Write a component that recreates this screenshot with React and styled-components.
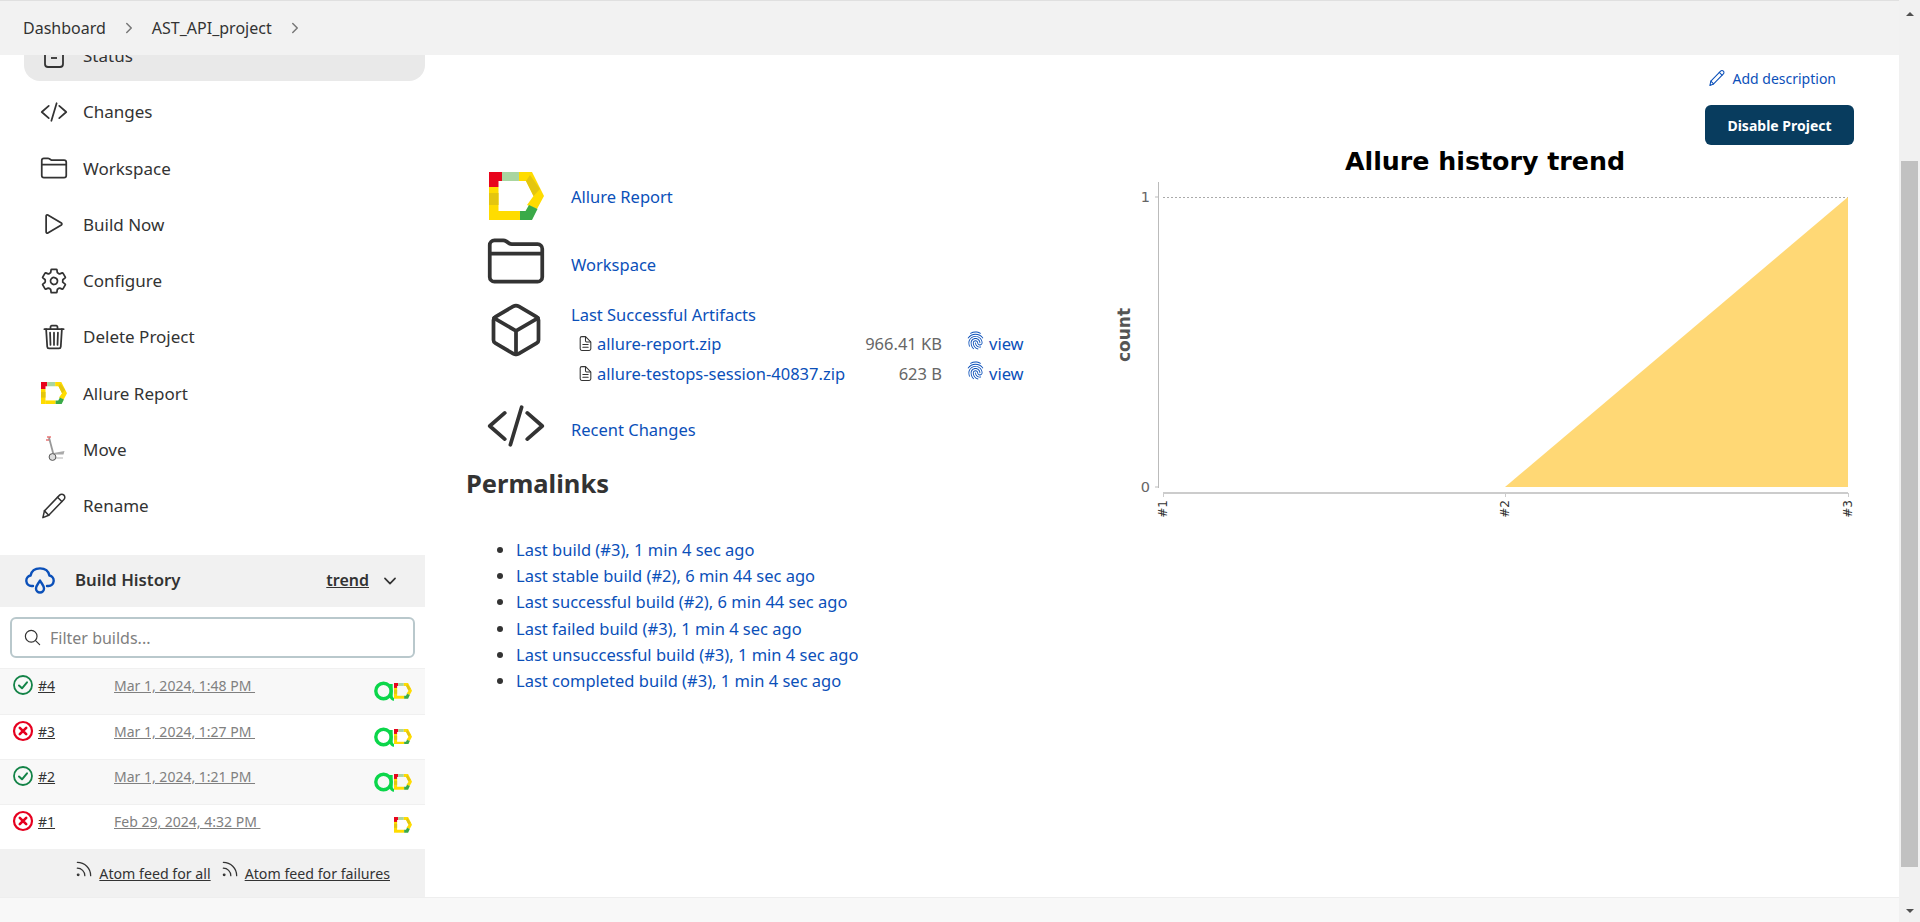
import React from "react";
import styled, { createGlobalStyle } from "styled-components";
import {
  IoCodeSlashOutline,
  IoFolderOutline,
  IoPlayOutline,
  IoSettingsOutline,
  IoTrashOutline,
  IoCubeOutline,
  IoDocumentTextOutline,
  IoFingerPrintOutline,
  IoSearchOutline,
  IoChevronDownOutline,
  IoChevronForwardOutline,
} from "react-icons/io5";
import { Rss } from "lucide-react";

const LINK = "#0b50b9";
const TEXT = "#333";

const GlobalStyle = createGlobalStyle`
  html, body { margin: 0; height: 100%; overflow: hidden; background: #fff; }
  body { font-family: "Noto Sans", "Liberation Sans", sans-serif; font-size: 16px; color: ${TEXT}; }
  * { box-sizing: border-box; }
`;

// shapes that no icon package has
const AllureLogo = ({ size = 56 }) => (
  <svg width={size} height={(size * 48) / 55} viewBox="0 0 55 48">
    <polygon points="0,0 13,0 13,9 9.5,9 9.5,15 0,15" fill="#e8041c" />
    <rect x="13" y="0" width="17" height="9" fill="#a9d5a0" />
    <polygon points="30,0 43,0 55,24 48,37 38,33 44.5,24 37,9 30,9" fill="#ffdc00" />
    <polygon points="37,9 41,3 51,17 44.5,24" fill="#e4c60e" />
    <rect x="0" y="15" width="9.5" height="33" fill="#ffdc00" />
    <rect x="0" y="21" width="9.5" height="12" fill="#e4c60e" />
    <rect x="9" y="39" width="22" height="9" fill="#ffdc00" />
    <polygon points="31,39 36.5,39 40,33 48.5,37 43,48 31,48" fill="#3aaa48" />
  </svg>
);

const AllureTestOps = () => (
  <svg width="20" height="20" viewBox="0 0 20 20">
    <circle cx="9.5" cy="10" r="7.7" fill="none" stroke="#0bd64a" strokeWidth="3.4" />
    <path d="M17.2 3v12q0 3 2.8 3.4" fill="none" stroke="#0bd64a" strokeWidth="3" />
  </svg>
);

const PencilGlyph = ({ size = 28, colour = TEXT, weight = 1.3 }) => (
  <svg width={size} height={size} viewBox="0 0 24 24" fill="none" stroke={colour} strokeWidth={weight} strokeLinejoin="round" strokeLinecap="round">
    <path d="M2.5 22l1.3-5.8L16.8 2.7a2.6 2.6 0 0 1 3.7 0 2.6 2.6 0 0 1 0 3.7L7.5 19.9z" />
    <path d="M3.8 16.2l3.7 3.7M15 4.5l3.7 3.7" />
  </svg>
);

const StatusGlyph = () => (
  <svg width="28" height="28" viewBox="0 0 28 28" fill="none" stroke={TEXT} strokeWidth="1.8">
    <rect x="5" y="3" width="18" height="22" rx="3" />
    <path d="M11 16h6" />
  </svg>
);

const MoveGlyph = () => (
  <svg width="28" height="28" viewBox="0 0 28 28" fill="none">
    <path d="M9 2.5l4.5 17" stroke="#999" strokeWidth="1.8" />
    <path d="M7 2h4M6 5h3" stroke="#d33" strokeWidth="1.2" />
    <path d="M13 19.5h10.5l1-3.5-11 2z" fill="#aaa" />
    <path d="M14 23h9" stroke="#ccc" strokeWidth="1.5" />
    <circle cx="12.5" cy="22" r="3.4" fill="#ddd" stroke="#555" />
  </svg>
);

const BuildHistoryGlyph = () => (
  <svg width="30" height="28" viewBox="0 0 30 28" fill="none" stroke={LINK} strokeWidth="2.4" strokeLinecap="round" strokeLinejoin="round">
    <path d="M8 19H6.5a5.3 5.3 0 0 1-.9-10.5C6.5 4 10 1.4 15 1.4s8.5 2.6 9.4 7.1A5.3 5.3 0 0 1 23.5 19H22" />
    <path d="M15 13.5c-1.8 3.4-4 5.2-4 8a4 4 0 0 0 8 0c0-2.8-2.2-4.6-4-8z" />
  </svg>
);

const BuildStatus = ({ ok }) => {
  const colour = ok ? "#138347" : "#e6001f";
  return (
    <svg width="22" height="22" viewBox="0 0 22 22" fill="none" stroke={colour} strokeWidth={ok ? 1.8 : 2.2} strokeLinecap="round" strokeLinejoin="round">
      <circle cx="11" cy="11" r="9" />
      {ok ? <path d="M7 11.5l3 2.8 5-6" strokeWidth="2" /> : <path d="M7.8 7.8l6.4 6.4M14.2 7.8l-6.4 6.4" strokeWidth="2.6" />}
    </svg>
  );
};

const TrendChart = () => (
  <Chart viewBox="0 0 754 380" width="754" height="380">
    <text x="385" y="25" textAnchor="middle" fontFamily="DejaVu Sans" fontWeight="700" fontSize="25.3" fill="#000">
      Allure history trend
    </text>
    <text transform="translate(30 190) rotate(-90)" textAnchor="middle" fontFamily="DejaVu Sans" fontWeight="700" fontSize="17" fill="#555">
      count
    </text>
    <path d="M58.5 37V343" stroke="#bbb" />
    <path d="M55 52h4M55 342h4" stroke="#bbb" />
    <path d="M63 52.5H748" stroke="#aaa" strokeDasharray="2 2" />
    <polygon points="405,342 748,52 748,342" fill="#ffd875" />
    <path d="M63 348H748" stroke="#ccc" strokeWidth="2" />
    <path d="M63.5 348v4M405.5 348v4M748.5 348v4" stroke="#ccc" />
    <text x="50" y="57" textAnchor="end" fontFamily="DejaVu Sans" fontSize="14.5" fill="#666">1</text>
    <text x="50" y="347" textAnchor="end" fontFamily="DejaVu Sans" fontSize="14.5" fill="#666">0</text>
    {[["#1", 63], ["#2", 405], ["#3", 748]].map(([label, x]) => (
      <text key={label} transform={`translate(${x + 4} 355) rotate(-90)`} textAnchor="end" fontFamily="DejaVu Sans" fontSize="12" fill="#333">
        {label}
      </text>
    ))}
  </Chart>
);

const menu = [
  ["Changes", <IoCodeSlashOutline size={28} />],
  ["Workspace", <IoFolderOutline size={28} />],
  ["Build Now", <IoPlayOutline size={28} />],
  ["Configure", <IoSettingsOutline size={28} />],
  ["Delete Project", <IoTrashOutline size={28} />],
  ["Allure Report", <AllureLogo size={26} />],
  ["Move", <MoveGlyph />],
  ["Rename", <PencilGlyph />],
];

const builds = [
  ["#4", true, "Mar 1, 2024, 1:48 PM", true],
  ["#3", false, "Mar 1, 2024, 1:27 PM", true],
  ["#2", true, "Mar 1, 2024, 1:21 PM", true],
  ["#1", false, "Feb 29, 2024, 4:32 PM", false],
];

const artifacts = [
  ["allure-report.zip", "966.41 KB"],
  ["allure-testops-session-40837.zip", "623 B"],
];

const permalinks = [
  "Last build (#3), 1 min 4 sec ago",
  "Last stable build (#2), 6 min 44 sec ago",
  "Last successful build (#2), 6 min 44 sec ago",
  "Last failed build (#3), 1 min 4 sec ago",
  "Last unsuccessful build (#3), 1 min 4 sec ago",
  "Last completed build (#3), 1 min 4 sec ago",
];

export default function App() {
  return (
    <Window>
      <GlobalStyle />
      <Page>
        <Header>
          <Crumb>Dashboard</Crumb>
          <IoChevronForwardOutline size={16} color="#777" />
          <Crumb>AST_API_project</Crumb>
          <IoChevronForwardOutline size={16} color="#777" />
        </Header>
        <Body>
          <Sidebar>
            <Menu>
              <MenuRow $active>
                <MenuIcon><StatusGlyph /></MenuIcon>
                Status
              </MenuRow>
              {menu.map(([label, icon]) => (
                <MenuRow key={label}>
                  <MenuIcon>{icon}</MenuIcon>
                  {label}
                </MenuRow>
              ))}
            </Menu>
            <HistoryBar>
              <BuildHistoryGlyph />
              <HistoryTitle>Build History</HistoryTitle>
              <Trend>trend</Trend>
              <IoChevronDownOutline size={18} />
            </HistoryBar>
            <FilterBox>
              <IoSearchOutline size={19} />
              <FilterInput placeholder="Filter builds..." readOnly />
            </FilterBox>
            <Builds>
              {builds.map(([num, ok, date, testOps], i) => (
                <BuildRow key={num} $striped={i % 2 === 0}>
                  <BuildStatus ok={ok} />
                  <BuildNumber>{num}</BuildNumber>
                  <BuildDate>{date + "\u00a0"}</BuildDate>
                  <Badges>
                    {testOps && <AllureTestOps />}
                    <AllureLogo size={18} />
                  </Badges>
                </BuildRow>
              ))}
            </Builds>
            <FeedBar>
              <FeedLink><Rss size={20} strokeWidth={1.5} /><span>Atom feed for all</span></FeedLink>
              <FeedLink><Rss size={20} strokeWidth={1.5} /><span>Atom feed for failures</span></FeedLink>
            </FeedBar>
          </Sidebar>
          <Main>
            <LeftColumn>
              <LinkRow $after={5}>
                <BigIcon><AllureLogo size={55} /></BigIcon>
                <Label $drop={0}>Allure Report</Label>
              </LinkRow>
              <LinkRow $after={9}>
                <BigIcon><IoFolderOutline size={60} /></BigIcon>
                <Label $drop={6}>Workspace</Label>
              </LinkRow>
              <LinkRow $after={8} $top>
                <BigIcon><IoCubeOutline size={60} /></BigIcon>
                <div>
                  <ArtifactsTitle>Last Successful Artifacts</ArtifactsTitle>
                  {artifacts.map(([name, size]) => (
                    <ArtifactRow key={name}>
                      <IoDocumentTextOutline size={17} />
                      <ArtifactName>{name}</ArtifactName>
                      <FileSize>{size}</FileSize>
                      <Fingerprint><IoFingerPrintOutline size={19} color={LINK} /></Fingerprint>
                      <ViewLink>view</ViewLink>
                    </ArtifactRow>
                  ))}
                </div>
              </LinkRow>
              <LinkRow $after={0}>
                <BigIcon><IoCodeSlashOutline size={60} /></BigIcon>
                <Label $drop={6}>Recent Changes</Label>
              </LinkRow>
              <Heading>Permalinks</Heading>
              <Permalinks>
                {permalinks.map((text) => (
                  <li key={text}><PermaLink>{text}</PermaLink></li>
                ))}
              </Permalinks>
            </LeftColumn>
            <RightColumn>
              <AddDescription><PencilGlyph size={18} colour={LINK} weight={1.4} /> Add description</AddDescription>
              <DisableButton>Disable Project</DisableButton>
              <TrendChart />
            </RightColumn>
          </Main>
        </Body>
        <Footer />
      </Page>
      <Rail>
        <ArrowUp />
        <Thumb />
        <ArrowDown />
      </Rail>
    </Window>
  );
}

const Window = styled.div`
  display: flex;
  height: 922px;
  overflow: hidden;
`;
const Page = styled.div`
  flex: 1;
  min-width: 0;
  display: flex;
  flex-direction: column;
`;
const Header = styled.header`
  position: relative;
  z-index: 2;
  height: 55px;
  flex: none;
  display: flex;
  align-items: center;
  gap: 15px;
  padding-left: 23px;
  background: #f2f2f2;
  border-top: 1px solid #e0e0e0;
`;
const Crumb = styled.span`
  color: ${TEXT};
`;
const Body = styled.div`
  flex: 1;
  min-height: 0;
  display: flex;
`;
const Footer = styled.footer`
  height: 25px;
  flex: none;
  background: #f8f8f8;
  border-top: 1px solid #eee;
`;
const Sidebar = styled.aside`
  width: 425px;
  flex: none;
  margin-top: -30px;
  display: flex;
  flex-direction: column;
`;
const Menu = styled.nav`
  margin-left: 24px;
  margin-bottom: 24px;
  font-size: 17px;
`;
const MenuRow = styled.div`
  height: 56.25px;
  display: flex;
  align-items: center;
  gap: 15px;
  padding: 5px 0 0 16px;
  border-radius: 16px;
  background: ${(p) => (p.$active ? "#e9e9e9" : "transparent")};
`;
const MenuIcon = styled.span`
  width: 28px;
  height: 28px;
  display: flex;
  align-items: center;
  justify-content: center;
`;
const HistoryBar = styled.div`
  height: 52px;
  display: flex;
  align-items: center;
  padding: 0 26px 0 25px;
  background: #f1f1f1;
`;
const HistoryTitle = styled.span`
  margin-left: 20px;
  padding-bottom: 3px;
  font-size: 16.8px;
  font-weight: 600;
`;
const Trend = styled.span`
  margin: 0 12px 2px auto;
  font-weight: 600;
  text-decoration: underline;
`;
const FilterBox = styled.label`
  height: 41px;
  margin: 10px;
  display: flex;
  align-items: center;
  gap: 6px;
  padding-left: 11px;
  border: 2px solid #b9c8cc;
  border-radius: 6px;
`;
const FilterInput = styled.input`
  flex: 1;
  min-width: 0;
  border: 0;
  outline: 0;
  background: transparent;
  font: inherit;
  color: ${TEXT};
  &::placeholder { color: #808080; opacity: 1; }
`;
const Builds = styled.div``;
const BuildRow = styled.div`
  height: 45.25px;
  display: flex;
  align-items: flex-start;
  padding: 5px 13px 0 12px;
  font-size: 14px;
  border-top: 1px solid #f0f0f0;
  background: ${(p) => (p.$striped ? "#f8f8f8" : "#fff")};
`;
const BuildNumber = styled.span`
  width: 76px;
  margin-left: 4px;
  line-height: 24px;
  text-decoration: underline;
`;
const BuildDate = styled.span`
  line-height: 24px;
  color: #808080;
  text-decoration: underline;
  white-space: pre;
`;
const Badges = styled.span`
  margin-left: auto;
  margin-top: 7px;
  display: flex;
  align-items: center;
`;
const FeedBar = styled.div`
  flex: 1;
  display: flex;
  justify-content: flex-end;
  gap: 9px;
  padding: 10px 35px 0 0;
  background: #f1f1f1;
  font-size: 14.2px;
`;
const FeedLink = styled.span`
  display: flex;
  align-items: flex-start;
  gap: 5px;
  height: 24px;
  span {
    margin-top: 5px;
    text-decoration: underline;
  }
`;
const Main = styled.main`
  flex: 1;
  min-width: 0;
  display: flex;
  justify-content: space-between;
  padding: 0 45px 0 41px;
  font-size: 16.5px;
`;
const LeftColumn = styled.div`
  padding-top: 111px;
`;
const LinkRow = styled.div`
  display: flex;
  align-items: ${(p) => (p.$top ? "flex-start" : "center")};
  gap: 25px;
  padding-left: 20px;
  margin-bottom: ${(p) => p.$after}px;
`;
const BigIcon = styled.span`
  width: 60px;
  height: 60px;
  flex: none;
  display: flex;
  align-items: center;
  justify-content: center;
`;
const Label = styled.a`
  color: ${LINK};
  padding-top: ${(p) => p.$drop}px;
`;
const ArtifactsTitle = styled.a`
  display: block;
  margin: 3px 0 2px;
  line-height: 24px;
  color: ${LINK};
`;
const ArtifactRow = styled.div`
  display: grid;
  grid-template-columns: 20px 345px 24px 23px auto;
  align-items: center;
  height: 29.5px;
  padding-left: 6px;
`;
const ArtifactName = styled.a`
  grid-column: 2;
  grid-row: 1;
  color: ${LINK};
`;
const FileSize = styled.span`
  grid-column: 2;
  grid-row: 1;
  justify-self: end;
  color: #666;
`;
const Fingerprint = styled.span`
  grid-column: 4;
  grid-row: 1;
  display: flex;
  margin-top: -6px;
`;
const ViewLink = styled.a`
  grid-column: 5;
  grid-row: 1;
  color: ${LINK};
`;
const Heading = styled.h2`
  margin: 9px 0 36px;
  font-size: 25.5px;
  line-height: 36px;
  font-weight: 700;
`;
const Permalinks = styled.ul`
  margin: 0;
  padding-left: 50px;
  line-height: 26.2px;
`;
const PermaLink = styled.a`
  color: ${LINK};
`;
const RightColumn = styled.div`
  width: 754px;
  display: flex;
  flex-direction: column;
  align-items: flex-end;
`;
const AddDescription = styled.a`
  display: flex;
  align-items: center;
  gap: 6px;
  margin: 12px 18px 16px 0;
  height: 22px;
  font-size: 14px;
  color: ${LINK};
`;
const DisableButton = styled.button`
  width: 149px;
  height: 40px;
  flex: none;
  border: 0;
  border-radius: 6px;
  background: #083c5e;
  color: #fff;
  font: 700 14px "Noto Sans", sans-serif;
`;
const Chart = styled.svg`
  display: block;
  flex: none;
`;
const Rail = styled.div`
  width: 21px;
  flex: none;
  display: flex;
  flex-direction: column;
  align-items: center;
  padding-top: 12px;
  background: #f1f1f1;
`;
const ArrowUp = styled.span`
  border-left: 4.5px solid transparent;
  border-right: 4.5px solid transparent;
  border-bottom: 4px solid #505050;
`;
const ArrowDown = styled.span`
  margin-top: 42px;
  border-left: 4.5px solid transparent;
  border-right: 4.5px solid transparent;
  border-top: 4px solid #505050;
`;
const Thumb = styled.span`
  width: 17px;
  height: 706px;
  margin-top: 145px;
  background: #c1c1c1;
`;
